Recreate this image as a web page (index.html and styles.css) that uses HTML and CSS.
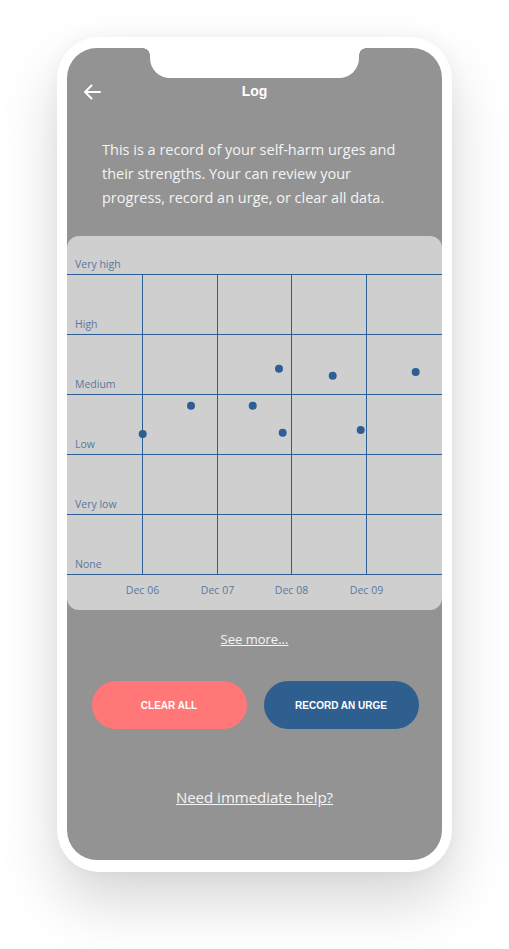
FILE: index.html
```html
<!DOCTYPE html>
<html lang="en">
<head>
<meta charset="utf-8">
<title>Log</title>
<link rel="stylesheet" href="styles.css">
</head>
<body>
<div class="phone">
  <div class="screen">
    <div class="notch"></div>
    <header class="topbar">
      <svg class="back" width="18" height="16" viewBox="0 0 18 16" aria-hidden="true">
        <path d="M17 8H2M8.5 1.5L2 8l6.5 6.5" fill="none" stroke="#fff" stroke-width="2" stroke-linecap="round" stroke-linejoin="round"/>
      </svg>
      <h1 class="title">Log</h1>
      <span></span>
    </header>
    <p class="intro">This is a record of your self-harm urges and their strengths. Your can review your progress, record an urge, or clear all data.</p>
    <section class="chart-card">
      <svg class="chart" width="375" height="374" viewBox="0 0 375 374">
        <g class="grid-lines">
          <line x1="0" y1="38.5" x2="375" y2="38.5"/>
          <line x1="0" y1="98.5" x2="375" y2="98.5"/>
          <line x1="0" y1="158.5" x2="375" y2="158.5"/>
          <line x1="0" y1="218.5" x2="375" y2="218.5"/>
          <line x1="0" y1="278.5" x2="375" y2="278.5"/>
          <line x1="0" y1="338.5" x2="375" y2="338.5"/>
          <line x1="75.5" y1="38" x2="75.5" y2="339"/>
          <line x1="150.5" y1="38" x2="150.5" y2="339"/>
          <line x1="224.5" y1="38" x2="224.5" y2="339"/>
          <line x1="299.5" y1="38" x2="299.5" y2="339"/>
        </g>
        <g class="y-labels">
          <text x="8" y="31.5">Very high</text>
          <text x="8" y="91.5">High</text>
          <text x="8" y="151.5">Medium</text>
          <text x="8" y="211.5">Low</text>
          <text x="8" y="271.5">Very low</text>
          <text x="8" y="331.5">None</text>
        </g>
        <g class="x-labels">
          <text x="75.5" y="357.5">Dec 06</text>
          <text x="150.5" y="357.5">Dec 07</text>
          <text x="224.5" y="357.5">Dec 08</text>
          <text x="299.5" y="357.5">Dec 09</text>
        </g>
        <g class="dots">
          <circle cx="75.7" cy="198" r="4"/>
          <circle cx="124" cy="169.7" r="4"/>
          <circle cx="185.7" cy="169.7" r="4"/>
          <circle cx="212" cy="132.7" r="4"/>
          <circle cx="215.7" cy="196.7" r="4"/>
          <circle cx="265.7" cy="139.7" r="4"/>
          <circle cx="293.7" cy="194" r="4"/>
          <circle cx="348.7" cy="136" r="4"/>
        </g>
      </svg>
    </section>
    <a class="see-more" href="#">See more...</a>
    <div class="actions">
      <button class="btn btn-clear" type="button">CLEAR ALL</button>
      <button class="btn btn-record" type="button">RECORD AN URGE</button>
    </div>
    <a class="help" href="#">Need immediate help?</a>
  </div>
</div>
</body>
</html>
```

FILE: styles.css
```css
* { box-sizing: border-box; }

html, body {
  margin: 0;
  padding: 0;
  background: #fff;
}

body {
  font-family: "Open Sans", "Liberation Sans", sans-serif;
  width: 509px;
  height: 949px;
  overflow: hidden;
}

.phone {
  margin: 37px 0 0 57px;
  width: 395px;
  height: 835px;
  padding: 11px 10px 12px;
  background: #fff;
  border-radius: 42px;
  box-shadow: 0 30px 60px rgba(0, 0, 0, 0.16), 0 0 20px rgba(0, 0, 0, 0.04);
}

.screen {
  position: relative;
  width: 375px;
  height: 812px;
  background: #939393;
  border-radius: 30px;
  display: flex;
  flex-direction: column;
  align-items: center;
}

.notch {
  position: absolute;
  top: 0;
  left: 83px;
  width: 209px;
  height: 30px;
  background: #fff;
  border-radius: 0 0 20px 20px;
}

.notch::before,
.notch::after {
  content: "";
  position: absolute;
  top: 0;
  width: 7px;
  height: 7px;
}

.notch::before {
  right: 100%;
  background: radial-gradient(circle at 0 100%, transparent 6.5px, #fff 7px);
}

.notch::after {
  left: 100%;
  background: radial-gradient(circle at 100% 100%, transparent 6.5px, #fff 7px);
}

.topbar {
  margin-top: 30px;
  width: 100%;
  height: 26px;
  display: grid;
  grid-template-columns: 1fr auto 1fr;
  align-items: center;
  padding: 0 16px;
}

.back {
  display: block;
  margin-top: 2px;
}

.title {
  margin: 0;
  font-family: "Liberation Sans", Arial, sans-serif;
  font-size: 14px;
  font-weight: bold;
  color: #fff;
  line-height: 26px;
}

.intro {
  margin: 34px 0 0;
  padding: 0 35px;
  width: 100%;
  font-size: 14.5px;
  line-height: 24px;
  color: #f4f4f4;
  letter-spacing: 0;
}

.chart-card {
  margin-top: 26px;
  width: 375px;
  height: 374px;
  background: #cfcfcf;
  border-radius: 12px;
  overflow: hidden;
}

.chart {
  display: block;
}

.grid-lines line {
  stroke: #2d5f95;
  stroke-width: 1;
}

.chart text {
  font-family: "Open Sans", "Liberation Sans", sans-serif;
  font-size: 10.5px;
  fill: #5a789c;
}

.x-labels text {
  text-anchor: middle;
}

.dots circle {
  fill: #2d5f95;
}

.see-more {
  margin-top: 21px;
  font-size: 13px;
  line-height: 16px;
  color: #f4f4f4;
  text-decoration: underline;
}

.actions {
  margin-top: 34px;
  display: flex;
  gap: 17px;
  padding-left: 1px;
}

.btn {
  width: 155px;
  height: 48px;
  border: 0;
  border-radius: 24px;
  font-family: "Liberation Sans", Arial, sans-serif;
  font-size: 10px;
  font-weight: bold;
  color: #fff;
  padding: 0;
}

.btn-clear {
  background: #ff7777;
}

.btn-record {
  background: #2f5f8f;
}

.help {
  margin-top: 58px;
  font-size: 15px;
  line-height: 20px;
  color: #f4f4f4;
  text-decoration: underline;
}
```
